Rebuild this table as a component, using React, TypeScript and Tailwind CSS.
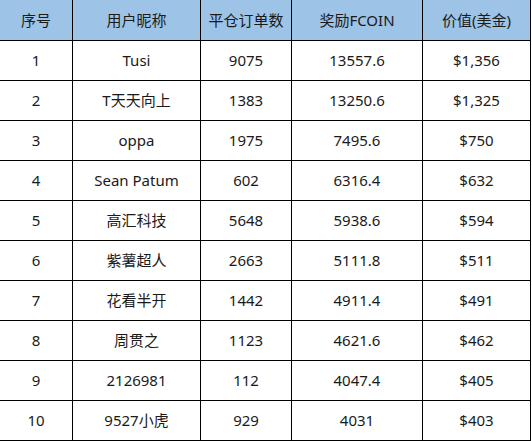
import React from 'react';

const rows = [
    ['1', 'Tusi', '9075', '13557.6', '$1,356'],
    ['2', 'T天天向上', '1383', '13250.6', '$1,325'],
    ['3', 'oppa', '1975', '7495.6', '$750'],
    ['4', 'Sean Patum', '602', '6316.4', '$632'],
    ['5', '高汇科技', '5648', '5938.6', '$594'],
    ['6', '紫薯超人', '2663', '5111.8', '$511'],
    ['7', '花看半开', '1442', '4911.4', '$491'],
    ['8', '周贯之', '1123', '4621.6', '$462'],
    ['9', '2126981', '112', '4047.4', '$405'],
    ['10', '9527小虎', '929', '4031', '$403'],
];

const headers = ['序号', '用户昵称', '平仓订单数', '奖励FCOIN', '价值(美金)'];

const App = () => {
    return (
        <div
            className="w-[532px] h-[441px] bg-white text-[15px] text-[#1a1a1a]"
            style={{fontFamily: '"Noto Sans", "Noto Sans CJK SC", sans-serif'}}
        >
            {/*table*/}
            <div className="grid grid-cols-[73px_128px_91px_131px_108px]">
                {headers.map((h) => (
                    <div key={h} className="h-[41px] bg-[#9dc3e6] border-r border-b border-black flex items-center justify-center">
                        {h}
                    </div>
                ))}
                {rows.map((r) =>
                    r.map((c, i) => (
                        <div key={r[0] + '-' + i} className="h-10 border-r border-b border-black flex items-center justify-center">
                            {c}
                        </div>
                    ))
                )}
            </div>
        </div>
    );
};

export default App;
